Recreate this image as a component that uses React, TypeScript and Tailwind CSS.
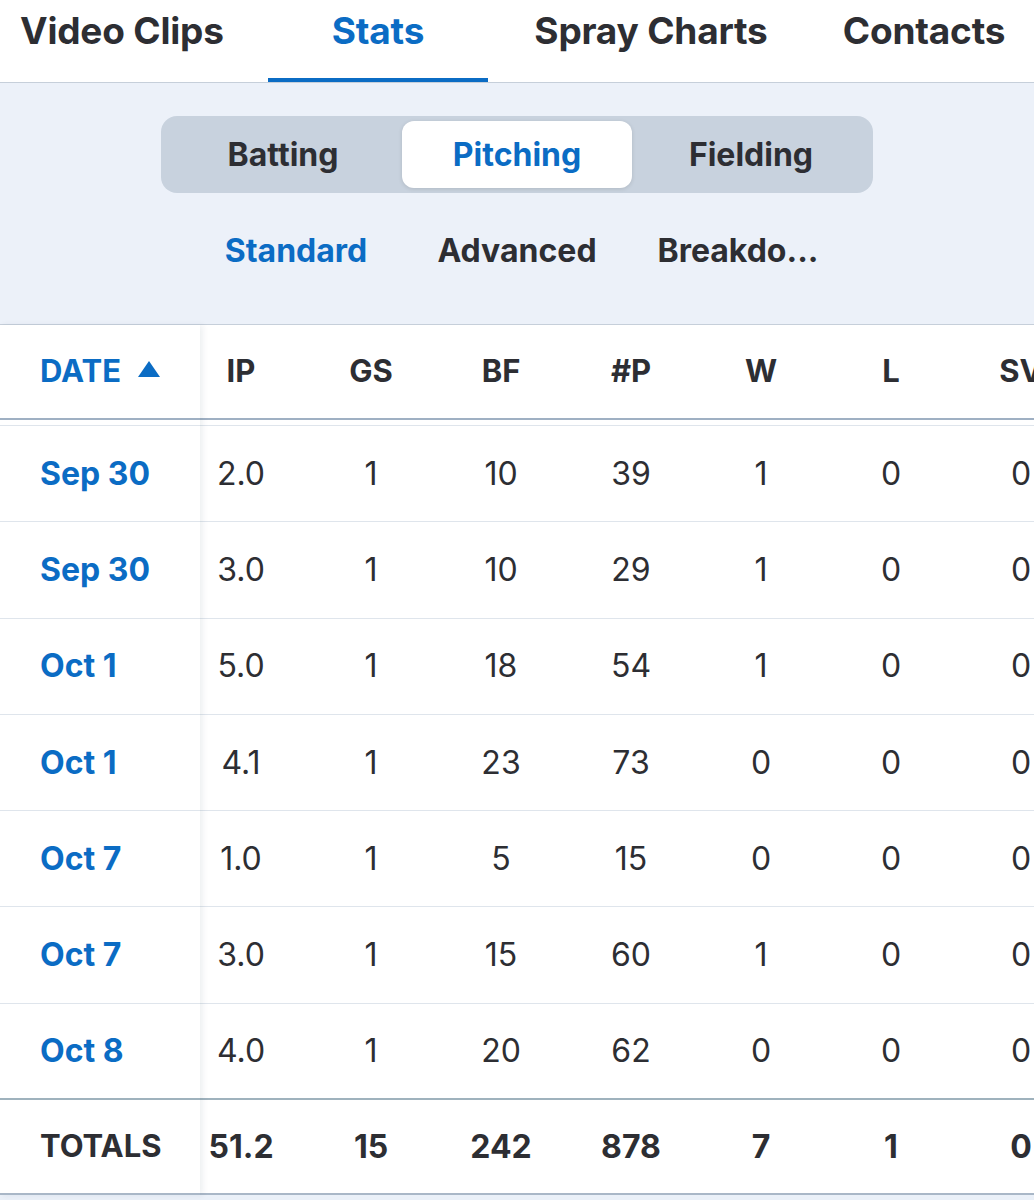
import React from "react";

const blue = "text-[#0b6cc4]";

const cols = ["IP", "GS", "BF", "#P", "W", "L", "SV"];

const rows: string[][] = [
  ["Sep 30", "2.0", "1", "10", "39", "1", "0", "0"],
  ["Sep 30", "3.0", "1", "10", "29", "1", "0", "0"],
  ["Oct 1", "5.0", "1", "18", "54", "1", "0", "0"],
  ["Oct 1", "4.1", "1", "23", "73", "0", "0", "0"],
  ["Oct 7", "1.0", "1", "5", "15", "0", "0", "0"],
  ["Oct 7", "3.0", "1", "15", "60", "1", "0", "0"],
  ["Oct 8", "4.0", "1", "20", "62", "0", "0", "0"],
];

const totals = ["51.2", "15", "242", "878", "7", "1", "0"];

function TopTabs() {
  const tabs = [
    { label: "Video Clips", cls: "w-[268px] pl-[20px] text-left" },
    { label: "Stats", cls: "w-[220px] text-center", active: true },
    { label: "Spray Charts", cls: "w-[326px] text-center" },
    { label: "Contacts", cls: "w-[220px] text-center" },
  ];
  return (
    <div className="flex h-[83px] border-b border-[#c6cfda] bg-white">
      {tabs.map((t) => (
        <div
          key={t.label}
          className={`${t.cls} shrink-0 whitespace-nowrap pt-[3px] text-[37px] font-bold tracking-[-0.2px] ${
            t.active ? `${blue} border-b-[4px] border-[#0b6cc4]` : "text-[#2d2e33]"
          }`}
        >
          {t.label}
        </div>
      ))}
    </div>
  );
}

function Segmented() {
  const items = ["Batting", "Pitching", "Fielding"];
  return (
    <div className="mx-auto grid h-[77px] w-[712px] grid-cols-3 rounded-[16px] bg-[#c8d2de] p-[5px]">
      {items.map((s) => (
        <div
          key={s}
          className={`flex items-center justify-center rounded-[12px] text-[32px] font-bold ${
            s === "Pitching"
              ? `mx-[2px] bg-white ${blue} shadow-[0_1px_4px_rgba(0,0,0,0.12)]`
              : "text-[#2d2e33]"
          }`}
        >
          {s}
        </div>
      ))}
    </div>
  );
}

function SubTabs() {
  const items = ["Standard", "Advanced", "Breakdo..."];
  return (
    <div className="mx-auto mt-[28px] grid h-[60px] w-[663px] grid-cols-3">
      {items.map((s, i) => (
        <div
          key={s}
          className={`flex items-center justify-center text-[32px] font-bold ${
            i === 0 ? blue : "text-[#2d2e33]"
          }`}
        >
          {s}
        </div>
      ))}
    </div>
  );
}

function SortUp() {
  return (
    <svg width="22" height="16" viewBox="0 0 22 16" className="ml-[17px] mb-[6px]">
      <polygon points="11,0 22,16 0,16" fill="#0b6cc4" />
    </svg>
  );
}

const ipCell = "w-[82px] mr-[24px] shrink-0 text-center";
const statCell = "w-[130px] shrink-0 text-center";

export default function App() {
  return (
    <div className="min-h-[1200px] bg-[#eaf0f8] font-['Inter',sans-serif] text-[#2d2e33]">
      <TopTabs />
      <div className="h-[241px] bg-[#ecf1f9] pt-[33px]">
        <Segmented />
        <SubTabs />
      </div>

      <div className="flex border-t border-[#c6cfda] bg-white">
        <div className="relative z-10 w-[200px] shrink-0 bg-white shadow-[3px_0_6px_rgba(20,40,70,0.07)]">
          <div className="flex h-[95px] items-center border-b-[2px] border-[#9fb0c3] pl-[40px] text-[31px] font-bold">
            <span className={blue}>DATE</span>
            <SortUp />
          </div>
          <div className="h-[6px] border-b border-[#dfe5ec]" />
          {rows.map((r, i) => (
            <div
              key={i}
              className={`flex h-[96.3px] items-center pl-[40px] text-[32px] font-bold ${blue} ${
                i === rows.length - 1 ? "border-b-[2px] border-[#9fb2bd]" : "border-b border-[#dfe5ec]"
              }`}
            >
              {r[0]}
            </div>
          ))}
          <div className="flex h-[95px] items-center border-b-[2px] border-[#a9b7c7] pl-[40px] text-[31px] font-bold">
            TOTALS
          </div>
        </div>

        <div className="flex-1 overflow-hidden">
          <div className="flex h-[95px] items-center border-b-[2px] border-[#9fb0c3] text-[31px] font-bold">
            {cols.map((c, i) => (
              <div key={c} className={i === 0 ? ipCell : statCell}>
                {c}
              </div>
            ))}
          </div>
          <div className="h-[6px] border-b border-[#dfe5ec]" />
          {rows.map((r, i) => (
            <div
              key={i}
              className={`flex h-[96.3px] items-center text-[32px] ${
                i === rows.length - 1 ? "border-b-[2px] border-[#9fb2bd]" : "border-b border-[#dfe5ec]"
              }`}
            >
              {r.slice(1).map((v, j) => (
                <div key={j} className={j === 0 ? ipCell : statCell}>
                  {v}
                </div>
              ))}
            </div>
          ))}
          <div className="flex h-[95px] items-center border-b-[2px] border-[#a9b7c7] text-[32px] font-bold">
            {totals.map((v, j) => (
              <div key={j} className={j === 0 ? ipCell : statCell}>
                {v}
              </div>
            ))}
          </div>
        </div>
      </div>
    </div>
  );
}
